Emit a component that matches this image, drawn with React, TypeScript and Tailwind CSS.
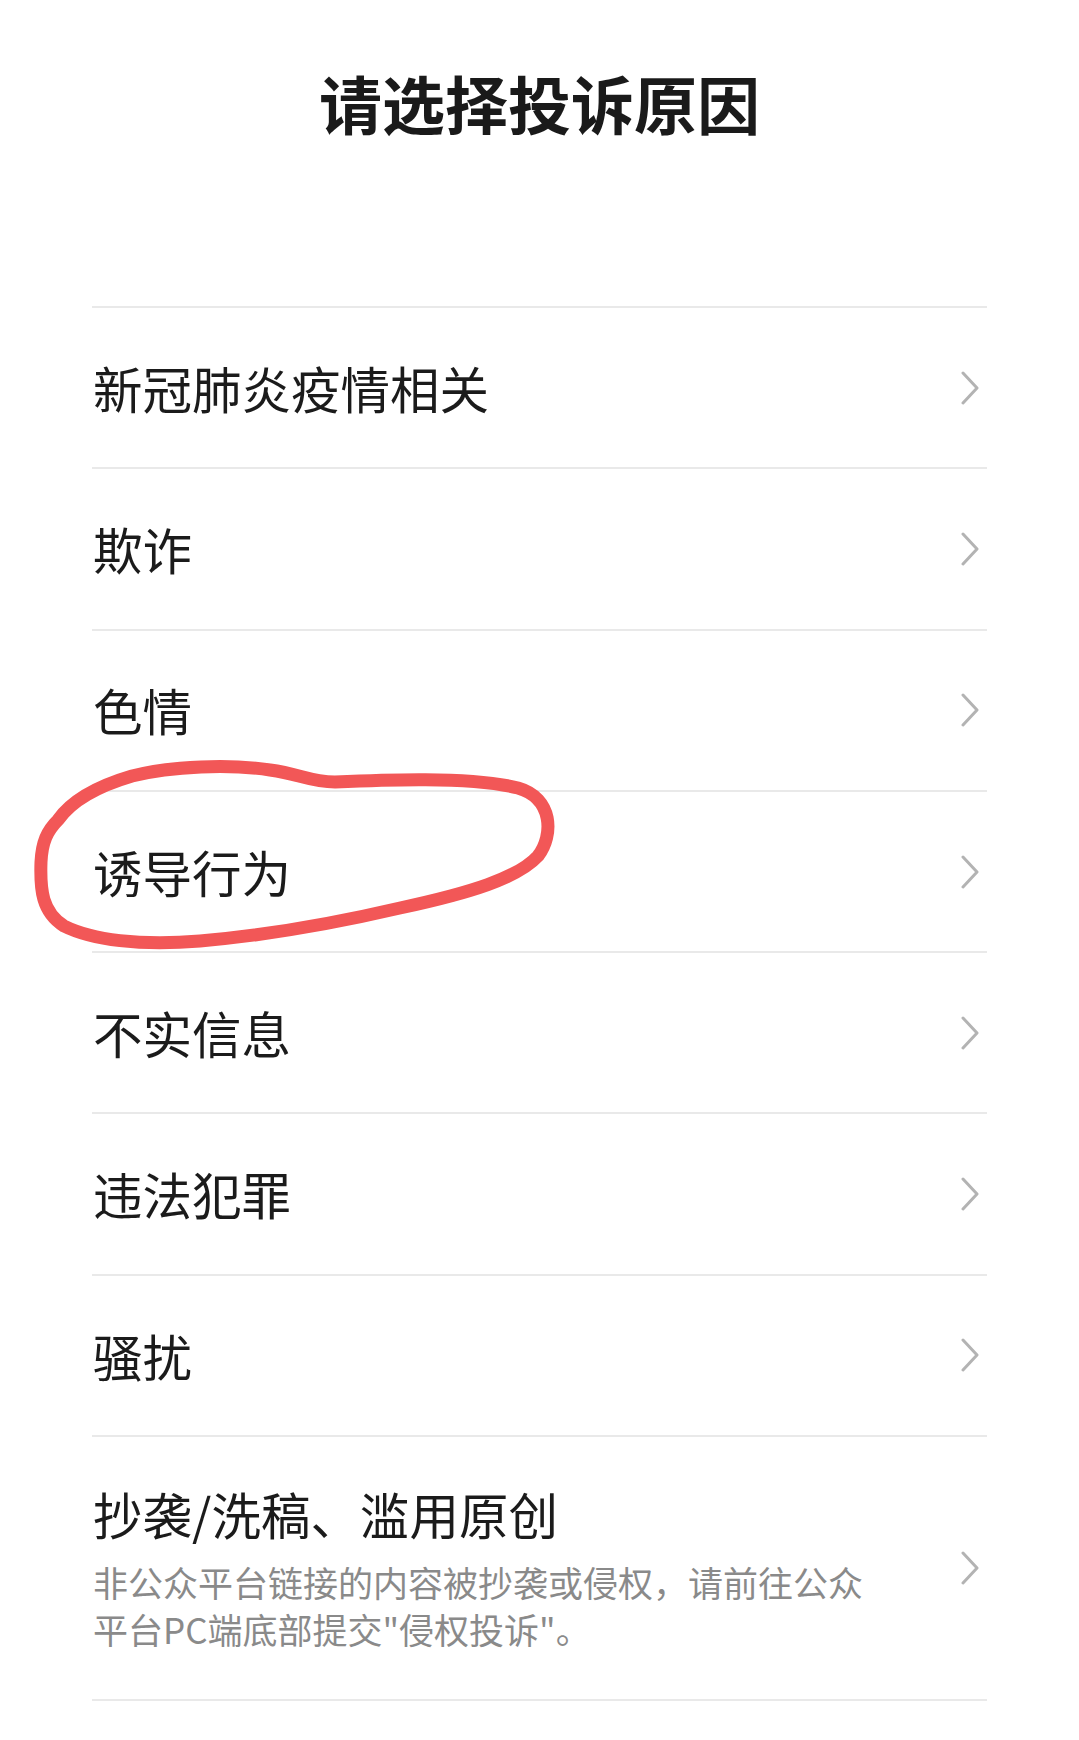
import React from "react";

const font = { fontFamily: '"Noto Sans CJK SC", "Noto Sans", sans-serif' };

function Chevron() {
  return (
    <svg width="20" height="34" viewBox="0 0 20 34" className="shrink-0">
      <polyline
        points="3,2 17,17 3,32"
        fill="none"
        stroke="#b3b3b3"
        strokeWidth="3"
        strokeLinecap="round"
        strokeLinejoin="round"
      />
    </svg>
  );
}

const items = ["新冠肺炎疫情相关", "欺诈", "色情", "诱导行为", "不实信息", "违法犯罪", "骚扰"];

export default function App() {
  return (
    <div className="relative w-[1079px] h-[1740px] bg-white overflow-hidden" style={font}>
      <div className="h-[306px] pt-[62px] flex justify-center">
        <h1 className="text-[63px] font-bold leading-[80px] text-[#1a1a1a]">请选择投诉原因</h1>
      </div>
      <div className="mx-[92px]">
        {items.map((t) => (
          <div
            key={t}
            className="h-[161.3px] border-t-2 border-[#e9e9e9] flex items-center justify-between pl-[1px] pr-[7px]"
          >
            <span className="text-[49.5px] leading-none text-[#1b1b1b]">{t}</span>
            <Chevron />
          </div>
        ))}
        <div className="h-[266px] border-t-2 border-b-2 border-[#e9e9e9] flex items-center justify-between pl-[1px] pr-[7px]">
          <div className="flex flex-col">
            <span className="text-[49.5px] leading-[60px] text-[#1b1b1b]">抄袭/洗稿、滥用原创</span>
            <span className="mt-[14px] text-[35px] leading-[47px] text-[#8a8a8a]">
              非公众平台链接的内容被抄袭或侵权，请前往公众
              <br />
              平台PC端底部提交"侵权投诉"。
            </span>
          </div>
          <Chevron />
        </div>
      </div>
      <svg
        className="absolute left-0 top-0 pointer-events-none"
        width="1079"
        height="1740"
        viewBox="0 0 1079 1740"
      >
        <path
          d="M 58 820 C 72 800, 98 786, 132 776 C 172 766, 230 764, 270 770 C 300 774, 310 782, 335 782 C 380 780, 470 776, 518 788 C 553 798, 554 835, 538 856 C 518 878, 470 893, 400 908 C 340 922, 270 935, 200 941 C 140 946, 92 940, 64 926 C 42 912, 40 890, 41 862 C 42 842, 47 831, 58 820 Z"
          fill="none"
          stroke="#f25757"
          strokeWidth="13"
          strokeLinecap="round"
          strokeLinejoin="round"
        />
      </svg>
    </div>
  );
}
